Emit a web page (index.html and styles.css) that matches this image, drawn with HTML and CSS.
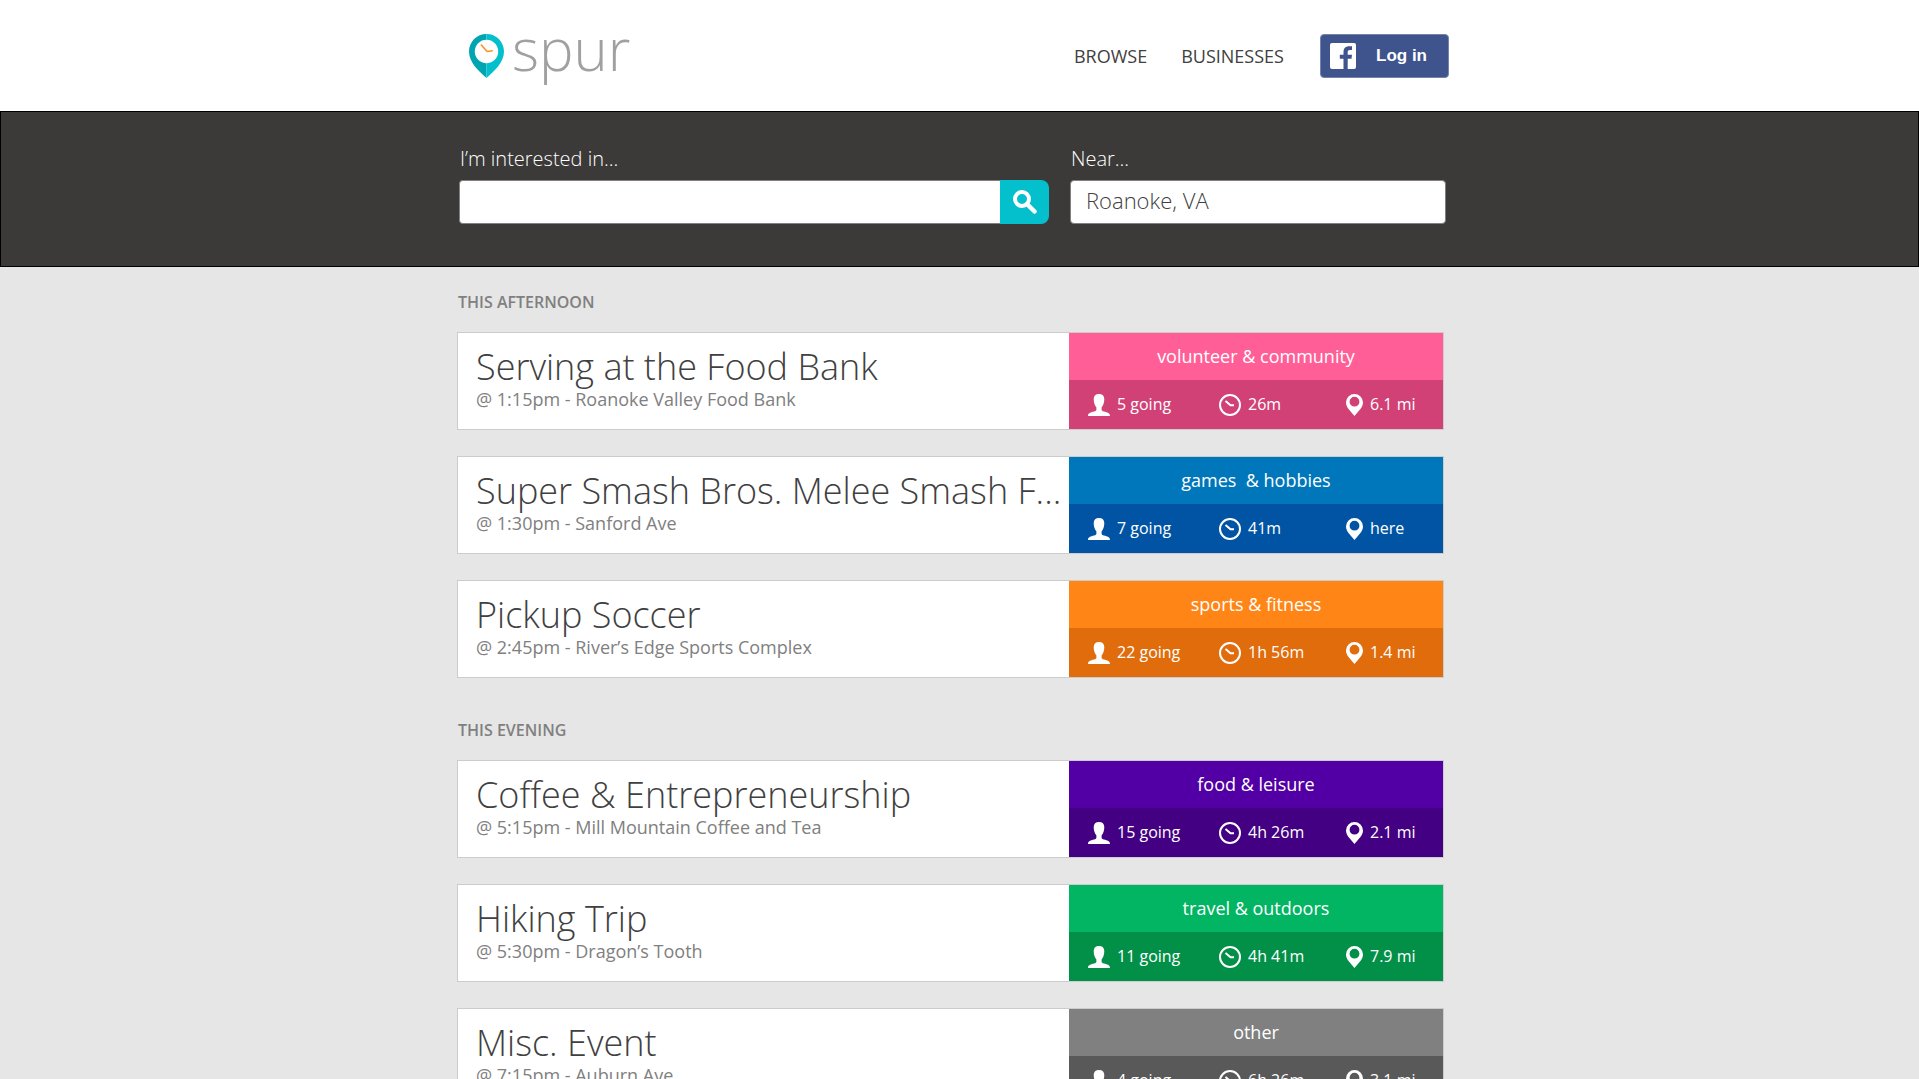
FILE: index.html
```html
<!DOCTYPE html>
<html lang="en">
<head>
<meta charset="utf-8">
<title>spur</title>
<meta name="viewport" content="width=device-width, initial-scale=1">
<link rel="stylesheet" href="styles.css">
</head>
<body>
<svg class="sprite" aria-hidden="true">
  <symbol id="person" viewBox="0 0 22 22"><path d="M11 0C7.600 0 5.700 1.900 5.700 5c0 3.400 1 6.600 2.700 8.400v2.100c0 1.200-.8 1.700-2.300 2.100C2.600 18.500 0 19 0 22h22c0-3-2.600-3.500-6.100-4.400-1.500-.4-2.300-.9-2.300-2.100v-2.100c1.700-1.800 2.700-5 2.700-8.400C16.300 1.900 14.400 0 11 0z" fill="currentColor"/></symbol>
  <symbol id="clock" viewBox="0 0 22 22"><circle cx="11" cy="11" r="10" fill="none" stroke="currentColor" stroke-width="2"/><path d="M6.500 7l5 4.200H15" fill="none" stroke="currentColor" stroke-width="2"/></symbol>
  <symbol id="pin" viewBox="0 0 17 22"><path d="M8.500 0A8.500 8.500 0 0 0 0 8.500C0 13.500 4.500 17 8.500 22 12.500 17 17 13.500 17 8.500A8.500 8.500 0 0 0 8.500 0zm0 2.800a4.900 4.900 0 1 1 0 9.800 4.900 4.900 0 0 1 0-9.800z" fill="currentColor" fill-rule="evenodd"/></symbol>
</svg>

<header class="band top">
  <div class="wrap top-row">
    <a class="logo" href="#">
      <svg width="35" height="44" viewBox="0 0 35 44" aria-hidden="true">
        <path d="M17.500 0C7.800 0 0 7.800 0 17.500 0 29 10.500 37.500 17.500 44z" fill="#00a5b2"/>
        <path d="M17.500 0C27.200 0 35 7.800 35 17.500 35 29 24.500 37.500 17.500 44z" fill="#04bfcc"/>
        <circle cx="17.500" cy="17.500" r="11.700" fill="#fff"/>
        <path d="M12 10.500l6 7 5.800-.8" fill="none" stroke="#f7941d" stroke-width="1.600"/>
      </svg>
      <span>spur</span>
    </a>
    <nav class="nav">
      <a href="#">BROWSE</a>
      <a href="#">BUSINESSES</a>
      <button class="login" type="button">
        <svg width="26" height="26" viewBox="0 0 26 26" aria-hidden="true"><rect width="26" height="26" rx="2" fill="#fff"/><path d="M13.500 26V15.800H9.800v-4h3.700V9c0-3.700 2-5.800 5.800-5.800H22v3.700h-1.900c-1.800 0-2.400.7-2.400 2.300v2.600H22l-.5 4h-3.800V26z" fill="#3f548d"/></svg>
        <span>Log in</span>
      </button>
    </nav>
  </div>
</header>

<form class="band search">
  <div class="wrap search-row">
    <div class="field">
      <label for="interest">I’m interested in...</label>
      <div class="combo">
        <input id="interest" type="text">
        <button type="button" aria-label="Search"><svg width="24" height="24" viewBox="0 0 24 24" aria-hidden="true"><circle cx="9" cy="9" r="7" fill="none" stroke="#fff" stroke-width="4"/><path d="M14 14l7.500 7.500" stroke="#fff" stroke-width="4.500" stroke-linecap="round"/></svg></button>
      </div>
    </div>
    <div class="field">
      <label for="near">Near...</label>
      <input id="near" type="text" value="Roanoke, VA">
    </div>
  </div>
</form>

<main class="band">
  <div class="wrap list">
    <section>
      <h2>THIS AFTERNOON</h2>
      <article class="card volunteer">
        <div class="info"><h3>Serving at the Food Bank</h3><p>@ 1:15pm - Roanoke Valley Food Bank</p></div>
        <div class="side">
          <div class="cat">volunteer &amp; community</div>
          <ul class="stats"><li><svg class="i"><use href="#person"/></svg>5 going</li><li><svg class="i"><use href="#clock"/></svg>26m</li><li><svg class="i pin"><use href="#pin"/></svg>6.1 mi</li></ul>
        </div>
      </article>
      <article class="card games">
        <div class="info"><h3>Super Smash Bros. Melee Smash F...</h3><p>@ 1:30pm - Sanford Ave</p></div>
        <div class="side">
          <div class="cat">games &nbsp;&amp; hobbies</div>
          <ul class="stats"><li><svg class="i"><use href="#person"/></svg>7 going</li><li><svg class="i"><use href="#clock"/></svg>41m</li><li><svg class="i pin"><use href="#pin"/></svg>here</li></ul>
        </div>
      </article>
      <article class="card sports">
        <div class="info"><h3>Pickup Soccer</h3><p>@ 2:45pm - River’s Edge Sports Complex</p></div>
        <div class="side">
          <div class="cat">sports &amp; fitness</div>
          <ul class="stats"><li><svg class="i"><use href="#person"/></svg>22 going</li><li><svg class="i"><use href="#clock"/></svg>1h 56m</li><li><svg class="i pin"><use href="#pin"/></svg>1.4 mi</li></ul>
        </div>
      </article>
    </section>
    <section>
      <h2>THIS EVENING</h2>
      <article class="card food">
        <div class="info"><h3>Coffee &amp; Entrepreneurship</h3><p>@ 5:15pm - Mill Mountain Coffee and Tea</p></div>
        <div class="side">
          <div class="cat">food &amp; leisure</div>
          <ul class="stats"><li><svg class="i"><use href="#person"/></svg>15 going</li><li><svg class="i"><use href="#clock"/></svg>4h 26m</li><li><svg class="i pin"><use href="#pin"/></svg>2.1 mi</li></ul>
        </div>
      </article>
      <article class="card travel">
        <div class="info"><h3>Hiking Trip</h3><p>@ 5:30pm - Dragon’s Tooth</p></div>
        <div class="side">
          <div class="cat">travel &amp; outdoors</div>
          <ul class="stats"><li><svg class="i"><use href="#person"/></svg>11 going</li><li><svg class="i"><use href="#clock"/></svg>4h 41m</li><li><svg class="i pin"><use href="#pin"/></svg>7.9 mi</li></ul>
        </div>
      </article>
      <article class="card other">
        <div class="info"><h3>Misc. Event</h3><p>@ 7:15pm - Auburn Ave</p></div>
        <div class="side">
          <div class="cat">other</div>
          <ul class="stats"><li><svg class="i"><use href="#person"/></svg>4 going</li><li><svg class="i"><use href="#clock"/></svg>6h 26m</li><li><svg class="i pin"><use href="#pin"/></svg>3.1 mi</li></ul>
        </div>
      </article>
    </section>
  </div>
</main>
</body>
</html>
```

FILE: styles.css
```css
* { box-sizing: border-box; }
body {
  margin: 0;
  background: #e6e6e6;
  color: #404041;
  font-family: "Open Sans", "Noto Sans", sans-serif;
}
.sprite { display: none; }
h2, h3, p, ul { margin: 0; padding: 0; }
a { color: inherit; text-decoration: none; }
button, input { font: inherit; border: 0; margin: 0; }

.band { padding-right: 15px; }
.wrap { max-width: 990px; margin: 0 auto; }

.top { background: #fff; }
.top-row {
  display: flex;
  align-items: center;
  justify-content: space-between;
  max-width: 994px;
  height: 111px;
  padding-left: 14px;
}
.logo {
  display: flex;
  align-items: center;
  gap: 8px;
  color: #a0a0a0;
  font-size: 58px;
  font-weight: 300;
  line-height: 80px;
}
.logo span { padding-bottom: 14px; }
.nav {
  display: flex;
  align-items: center;
  gap: 34px;
  font-size: 18px;
}
.login {
  display: flex;
  align-items: center;
  gap: 20px;
  width: 129px;
  height: 44px;
  margin-left: 2px;
  padding: 0 9px;
  border: 1px solid #7484ad;
  border-radius: 4px;
  background: #3f548d;
  color: #fff;
  font: bold 17px "Liberation Sans", Arial, sans-serif;
}

.search {
  background: #3b3a38;
  border: 1px solid #000;
  padding-top: 33px;
  padding-bottom: 42px;
}
.search-row {
  display: grid;
  grid-template-columns: minmax(0, 1fr) 376px;
  gap: 21px;
  padding: 0 1px 0 2px;
}
.field label {
  display: block;
  margin-bottom: 7px;
  padding-left: 1px;
  color: #fff;
  font-size: 20px;
  font-weight: 300;
  line-height: 28px;
}
.field input {
  display: block;
  width: 100%;
  height: 44px;
  padding: 0 15px 4px;
  border: 1px solid #808080;
  border-radius: 4px;
  background: #fff;
  color: #404041;
  font-size: 22px;
  font-weight: 300;
}
.combo { display: flex; }
.combo input { flex: 1; min-width: 0; border-right: 0; border-radius: 4px 0 0 4px; }
.combo button {
  display: flex;
  align-items: center;
  justify-content: center;
  width: 49px;
  padding: 0;
  border-radius: 0 8px 8px 0;
  background: #04bfcc;
}

.list { padding: 23px 3px 40px 0; }
section { margin-bottom: 40px; }
h2 {
  margin-bottom: 18px;
  padding-left: 1px;
  color: #808080;
  font-size: 16px;
  font-weight: 600;
  line-height: 24px;
}
.card {
  display: grid;
  grid-template-columns: minmax(0, 1fr) 374px;
  margin-bottom: 26px;
  border: 1px solid #ccc;
  background: #fff;
}
.info { padding: 9px 0 0 18px; }
h3 {
  overflow: hidden;
  margin-bottom: -6px;
  font-size: 36px;
  font-weight: 300;
  line-height: 50px;
  white-space: nowrap;
  text-overflow: ellipsis;
}
.info p { color: #808080; font-size: 18px; line-height: 26px; }
.side { color: #fff; }
.cat {
  background: var(--light);
  font-size: 18px;
  line-height: 47px;
  text-align: center;
}
.stats {
  display: grid;
  grid-template-columns: 131px 127px 1fr;
  padding-left: 19px;
  background: var(--dark);
  font-size: 16px;
  line-height: 49px;
  list-style: none;
}
.stats li { display: flex; align-items: center; gap: 7px; }
.i { width: 22px; height: 22px; }
.i.pin { width: 17px; }

.volunteer { --light: #ff5f96; --dark: #d14176; }
.games { --light: #0077bb; --dark: #0054a3; }
.sports { --light: #ff8517; --dark: #e06c0c; }
.food { --light: #5200a5; --dark: #430082; }
.travel { --light: #02b563; --dark: #029048; }
.other { --light: #808080; --dark: #595959; }
```
